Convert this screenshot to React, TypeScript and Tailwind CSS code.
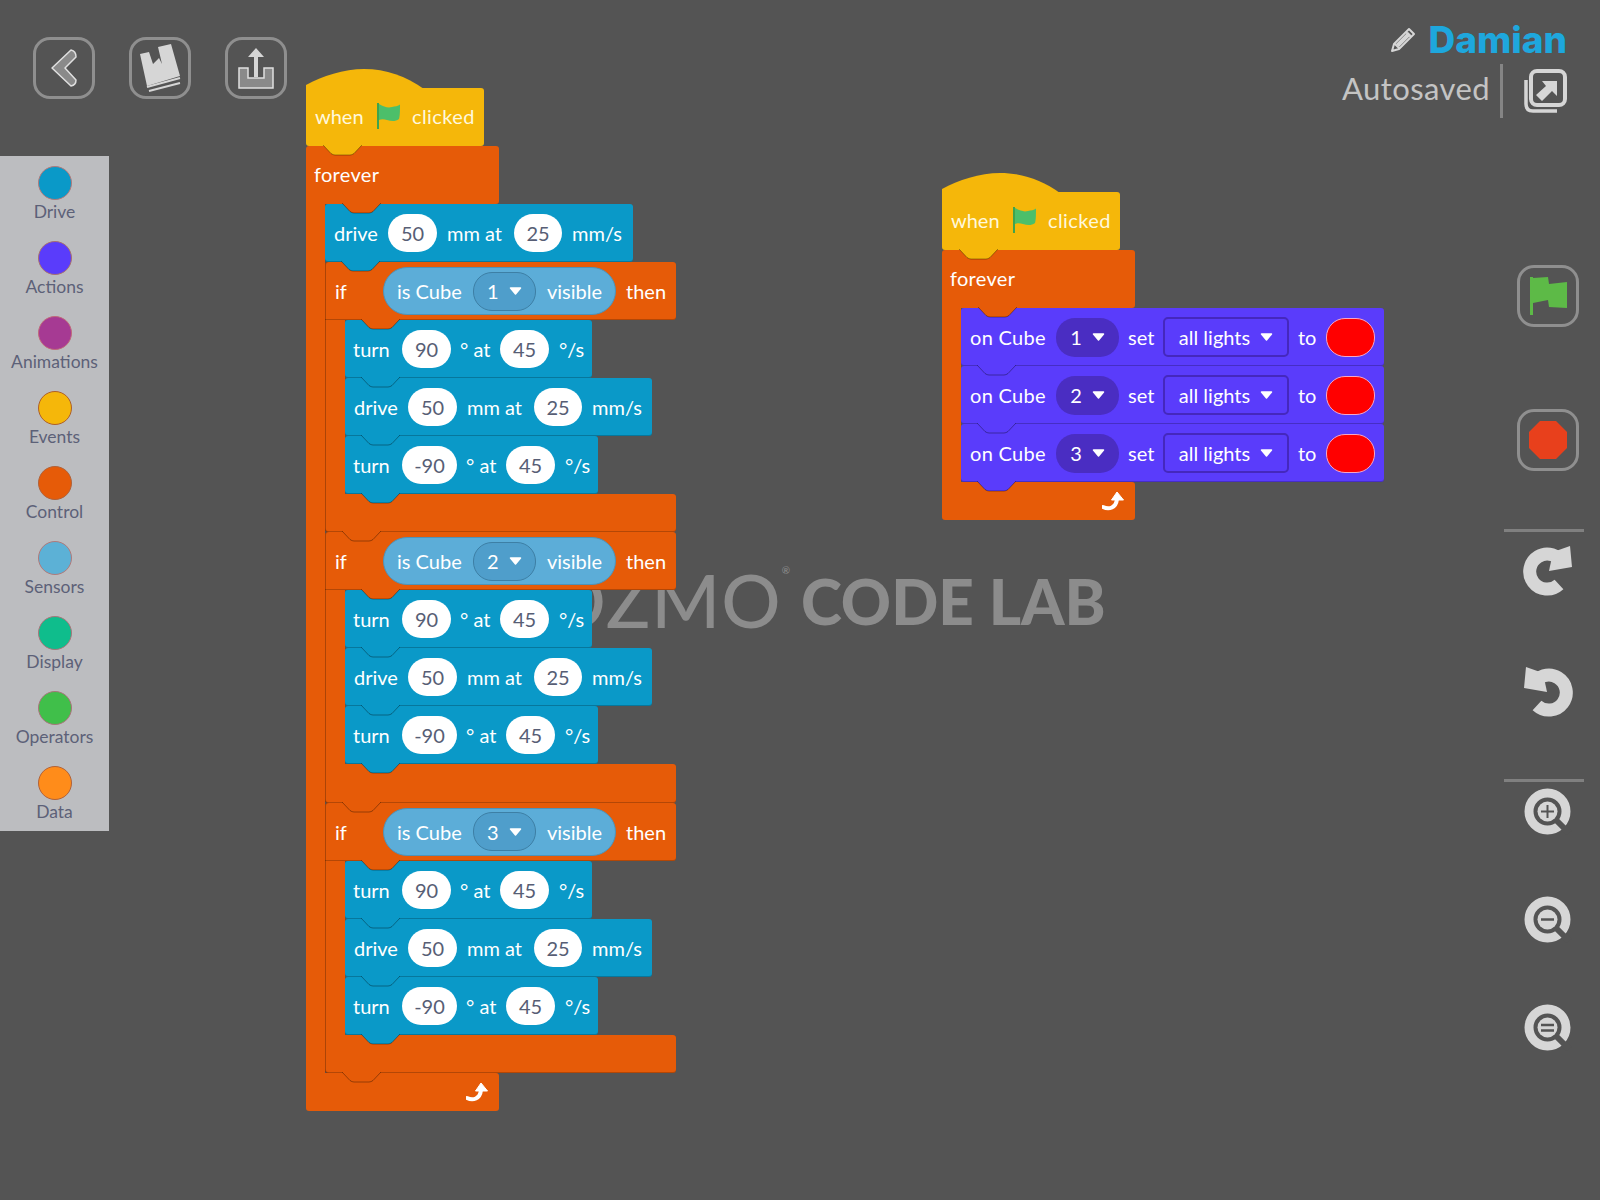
import type { ReactNode } from "react";

const tones = {
  blue: { bg: "bg-[#0a99c8]", fill: "fill-[#0a99c8]" },
  orange: { bg: "bg-[#e65b08]", fill: "fill-[#e65b08]" },
  yellow: { bg: "bg-[#f5b70a]", fill: "fill-[#f5b70a]" },
  purple: { bg: "bg-[#5a3cfb]", fill: "fill-[#5a3cfb]" },
};
type Tone = keyof typeof tones;

const categories = [
  { name: "Drive", dot: "bg-[#0a99c8] border-[#b0797a]" },
  { name: "Actions", dot: "bg-[#5a3cfb] border-[#a8706f]" },
  { name: "Animations", dot: "bg-[#a63a93] border-[#c0697a]" },
  { name: "Events", dot: "bg-[#f5b70a] border-[#ad5f2a]" },
  { name: "Control", dot: "bg-[#e65b08] border-[#b0623a]" },
  { name: "Sensors", dot: "bg-[#5cb1d6] border-[#b07a7a]" },
  { name: "Display", dot: "bg-[#0fbd8c] border-[#a8757a]" },
  { name: "Operators", dot: "bg-[#40bf4a] border-[#a8757a]" },
  { name: "Data", dot: "bg-[#ff8c1a] border-[#b0623a]" },
];

function Notch({ tone, className }: { tone: Tone; className: string }) {
  return (
    <svg width="39" height="11" viewBox="0 0 39 11" className={`absolute top-full z-10 -mt-px ${className}`}>
      <path d="M0 0 L8 8.5 Q10 10 12 10 H27 Q29 10 31 8.5 L39 0 Z" className={tones[tone].fill} />
      <path d="M0 0 L8 8.5 Q10 10 12 10 H27 Q29 10 31 8.5 L39 0" fill="none" stroke="rgba(0,0,0,0.35)" />
    </svg>
  );
}

function Pill({ children, width = "w-[49px]" }: { children: ReactNode; width?: string }) {
  return (
    <span className={`flex h-[38px] shrink-0 items-center justify-center rounded-[19px] bg-white text-[#575e75] ${width}`}>
      {children}
    </span>
  );
}

function Caret() {
  return (
    <svg width="13" height="8" viewBox="0 0 13 8" className="shrink-0">
      <path d="M1.5 1 H11.5 L6.5 7 Z" fill="#fff" stroke="#fff" strokeWidth="1.5" strokeLinejoin="round" />
    </svg>
  );
}

function Row({ tone, width, children }: { tone: Tone; width: string; children: ReactNode }) {
  return (
    <div
      className={`relative flex h-[58px] items-center rounded-[3px] pl-[9px] text-white shadow-[inset_0_-1px_0_rgba(0,0,0,0.22)] ${tones[tone].bg} ${width}`}
    >
      {children}
      <Notch tone={tone} className="left-[16px]" />
    </div>
  );
}

function Drive({ width = "w-[307px]" }: { width?: string }) {
  return (
    <Row tone="blue" width={width}>
      <span className="w-[54px]">drive</span>
      <Pill>50</Pill>
      <span className="w-[77px] pl-[10px]">mm at</span>
      <Pill width="w-[48px]">25</Pill>
      <span className="pl-[10px]">mm/s</span>
    </Row>
  );
}

function Turn({ angle, width, pill = "w-[49px]" }: { angle: string; width: string; pill?: string }) {
  return (
    <Row tone="blue" width={width}>
      <span className="-ml-px w-[49px]">turn</span>
      <Pill width={pill}>{angle}</Pill>
      <span className="w-[49px] pl-[9px]">° at</span>
      <Pill>45</Pill>
      <span className="pl-[10px]">°/s</span>
    </Row>
  );
}

function IfCube({ cube }: { cube: number }) {
  return (
    <div className="flex flex-col">
      <div className="relative flex h-[58px] w-[351px] items-center rounded-t-[3px] rounded-br-[3px] bg-[#e65b08] pl-[10px] text-white shadow-[inset_0_-1px_0_rgba(0,0,0,0.22),inset_1px_0_0_rgba(0,0,0,0.25)]">
        <span className="w-[48px]">if</span>
        <div className="flex h-[48px] w-[233px] items-center justify-between rounded-[24px] border border-[#4f93b8] bg-[#5cadd8] pr-[13px] pl-[13px]">
          <span>is Cube</span>
          <span className="flex h-[39px] w-[63px] items-center justify-center gap-[10px] rounded-[19px] border border-[#3d7fa5] bg-[#4f9ecb]">
            {cube}
            <Caret />
          </span>
          <span>visible</span>
        </div>
        <span className="ml-[10px]">then</span>
        <Notch tone="orange" className="left-[36px]" />
      </div>
      <div className="flex">
        <div className="w-[20px] bg-[#e65b08] shadow-[inset_1px_0_0_rgba(0,0,0,0.25)]" />
        <div className="flex flex-col">
          <Turn angle="90" width="w-[247px]" />
          <Drive />
          <Turn angle="-90" width="w-[253px]" pill="w-[55px]" />
        </div>
      </div>
      <div className="relative h-[38.4px] w-[351px] rounded-r-[3px] rounded-bl-[3px] bg-[#e65b08] shadow-[inset_0_-1px_0_rgba(0,0,0,0.22),inset_1px_0_0_rgba(0,0,0,0.25)]">
        <Notch tone="orange" className="left-[17px]" />
      </div>
    </div>
  );
}

function CubeLights({ cube }: { cube: number }) {
  return (
    <Row tone="purple" width="w-[423px]">
      <span className="w-[86px] tracking-[0.3px]">on Cube</span>
      <span className="flex h-[39px] w-[63px] shrink-0 items-center justify-center gap-[10px] rounded-[19px] bg-[#4a2dc2]">
        {cube}
        <Caret />
      </span>
      <span className="w-[44px] pl-[9px]">set</span>
      <span className="flex h-[40px] w-[126px] shrink-0 items-center justify-center gap-[10px] rounded-[5px] border-2 border-[#4528bd]">
        all lights
        <Caret />
      </span>
      <span className="w-[37px] pl-[9px]">to</span>
      <span className="h-[39px] w-[49px] rounded-[19px] border border-[#f5a6c8] bg-[#ff0000]" />
    </Row>
  );
}

function GreenFlag({ className }: { className: string }) {
  return (
    <svg viewBox="0 0 24 26" className={className}>
      <path d="M1 0 H3 V26 H1 Z" fill="#3fa34d" />
      <path d="M3 1 C8 4 12 5 16 4 C19 3.5 22 3 24 1.5 C24 7 24 13 23 16 C19 19 15 18 11 17 C8 16 5 16 3 17 Z" fill="#4cbf6a" />
    </svg>
  );
}

function LoopArrow() {
  return (
    <svg width="22" height="19" viewBox="0 0 22 19">
      <path d="M1 15 C7 18 14 16 15 7" fill="none" stroke="#fff" strokeWidth="4" strokeLinecap="round" />
      <path d="M15 0 L21.5 8 H9.5 Z" fill="#fff" stroke="#fff" strokeLinejoin="round" />
    </svg>
  );
}

function Stack({ className, children }: { className: string; children: ReactNode }) {
  return (
    <div className={`absolute flex flex-col ${className}`}>
      <div className="relative flex h-[58px] w-[178px] items-center rounded-r-[3px] rounded-bl-[3px] bg-[#f5b70a] pb-[2px] pl-[9px] text-[#fff8dc]">
        <svg width="118" height="22" viewBox="0 0 118 22" className="absolute bottom-full left-0 -mb-px">
          <path d="M0 22 V18 C16 9 38 2 58 2 C80 2 100 9 118 22 Z" className="fill-[#f5b70a]" />
        </svg>
        <span className="w-[61px]">when</span>
        <GreenFlag className="h-[26px] w-[24px]" />
        <span className="ml-[12px] tracking-[0.4px]">clicked</span>
        <Notch tone="yellow" className="left-[17px]" />
      </div>
      <div className="relative flex h-[58px] w-[193px] items-center rounded-t-[3px] rounded-br-[3px] bg-[#e65b08] pb-[2px] pl-[8px] tracking-[0.3px] text-white">
        forever
        <Notch tone="orange" className="left-[36px]" />
      </div>
      <div className="flex">
        <div className="w-[19px] bg-[#e65b08]" />
        <div className="flex flex-col">{children}</div>
      </div>
      <div className="flex h-[38px] w-[193px] items-center justify-end rounded-r-[3px] rounded-bl-[3px] bg-[#e65b08] pr-[11px]">
        <LoopArrow />
      </div>
    </div>
  );
}

function IconButton({ children }: { children: ReactNode }) {
  return (
    <div className="flex h-[62px] w-[62px] items-center justify-center rounded-[17px] border-[3px] border-[#8f8f8f]">
      {children}
    </div>
  );
}

function ZoomIcon({ children }: { children: ReactNode }) {
  return (
    <svg width="48" height="48" viewBox="0 0 48 48">
      <circle cx="23.5" cy="23.5" r="18.5" fill="none" stroke="#d6d6d6" strokeWidth="9" />
      <path d="M31 31 L45 45" stroke="#545454" strokeWidth="6" />
      <circle cx="23.5" cy="23.5" r="10" fill="#d6d6d6" />
      {children}
    </svg>
  );
}

function Circular({ flip }: { flip?: boolean }) {
  return (
    <svg width="50" height="50" viewBox="0 0 50 50" className={flip ? "-scale-x-100" : ""}>
      <path d="M36 38.5 A17.5 17.5 0 1 1 40 18" fill="none" stroke="#d6d6d6" strokeWidth="13" />
      <path d="M47 0 L49 21 L26 25 L30 6 Z" fill="#d6d6d6" />
    </svg>
  );
}

export default function App() {
  return (
    <div className="relative flex h-[1200px] w-[1600px] justify-between overflow-hidden bg-[#545454] font-['Lato',sans-serif] text-[20px]">
      <div className="flex flex-col">
        <div className="mt-[37px] ml-[33px] flex gap-[34px]">
          <IconButton>
            <svg width="30" height="40" viewBox="0 0 30 40">
              <path d="M22 2 L3 20 L22 38 Q27 37 27 32 L16 20 L27 9 Q27 3 22 2 Z" fill="#8a8a8a" stroke="#e0e0e0" strokeWidth="1.5" strokeLinejoin="round" />
            </svg>
          </IconButton>
          <IconButton>
            <svg width="44" height="50" viewBox="0 0 44 50">
              <path d="M2 11 L11 9 L15 21 L21 15 L24 21 L20 4 L33 1 L42 33 L9 43 Z" fill="#d6d6d6" />
              <path d="M9 44 L42 35 M11 48 L42 40" stroke="#d6d6d6" strokeWidth="2" />
            </svg>
          </IconButton>
          <IconButton>
            <svg width="38" height="42" viewBox="0 0 38 42">
              <path d="M2 21 H11 V31 H27 V21 H36 V41 H2 Z" fill="#8a8a8a" stroke="#e0e0e0" strokeWidth="1.5" />
              <path d="M17 30 V10 H11 L19 1 L27 10 H21 V30 Z" fill="#d6d6d6" />
            </svg>
          </IconButton>
        </div>
        <div className="mt-[57px] flex h-[675px] w-[109px] flex-col bg-[#bcbdc0] pt-[10px]">
          {categories.map((c) => (
            <div key={c.name} className="flex h-[75px] shrink-0 flex-col items-center">
              <span className={`h-[34px] w-[34px] rounded-full border ${c.dot}`} />
              <span className="text-[17.5px] leading-[24px] text-[#5c6178]">{c.name}</span>
            </div>
          ))}
        </div>
      </div>

      <div className="mr-[16px] flex w-[240px] flex-col items-end">
        <div className="mt-[17px] mr-[17px] flex items-center gap-[12px]">
          <svg width="26" height="26" viewBox="0 0 26 26">
            <path d="M19 2 L24 7 L9 22 L2 24 L4 17 Z M16 5 L21 10 M5 17 L9 21" fill="none" stroke="#d6d6d6" strokeWidth="2" strokeLinejoin="round" />
            <path d="M18 5 L21 8 L9 20 L6 17 Z" fill="#d6d6d6" />
          </svg>
          <span className="font-['Inter',sans-serif] text-[37px] leading-[46px] font-extrabold text-[#1ea7dd]">Damian</span>
        </div>
        <div className="mt-[1px] flex h-[54px] w-full items-center justify-end whitespace-nowrap">
          <span className="-mt-[6px] text-[31px] tracking-[0.4px] text-[#c4c4c4]">Autosaved</span>
          <span className="mr-[11px] ml-[10px] h-[54px] w-[3px] shrink-0 bg-[#858585]" />
          <svg width="46" height="46" viewBox="0 0 46 46" className="mr-[16px] ml-[8px] shrink-0">
            <rect x="9" y="3" width="34" height="34" rx="6" fill="none" stroke="#d6d6d6" strokeWidth="4" />
            <path d="M4 12 V36 Q4 43 11 43 H35" fill="none" stroke="#d6d6d6" strokeWidth="3.5" />
            <path d="M20 13 H35 V28 L30 23 L20 33 L14 27 L24 18 Z" fill="#d6d6d6" />
          </svg>
        </div>
        <div className="mt-[147px] flex w-[80px] flex-col items-start">
          <div className="ml-[13px]">
            <IconButton>
              <svg width="40" height="40" viewBox="0 0 40 40">
                <path d="M2 1 H5 V39 H2 Z M5 2 L20 1 L21 8 L39 6 V32 L21 31 L20 24 L5 27 Z" fill="#5dba47" />
              </svg>
            </IconButton>
          </div>
          <div className="mt-[82px] ml-[13px]">
            <IconButton>
              <svg width="40" height="40" viewBox="0 0 40 40">
                <path d="M12 1 H28 L39 12 V28 L28 39 H12 L1 28 V12 Z" fill="#e8401c" />
              </svg>
            </IconButton>
          </div>
          <div className="mt-[58px] h-[3px] w-[80px] bg-[#808080]" />
          <div className="mt-[14px] ml-[19px]">
            <Circular />
          </div>
          <div className="mt-[71px] ml-[19px]">
            <Circular flip />
          </div>
          <div className="mt-[62px] h-[3px] w-[80px] bg-[#808080]" />
          <div className="mt-[6px] ml-[20px] flex flex-col gap-[60px]">
            <ZoomIcon>
              <path d="M23.5 17 V30 M17 23.5 H30" stroke="#545454" strokeWidth="2" />
            </ZoomIcon>
            <ZoomIcon>
              <path d="M17 23.5 H30" stroke="#545454" strokeWidth="2.5" />
            </ZoomIcon>
            <ZoomIcon>
              <path d="M17 21 H30 M17 26.5 H30" stroke="#545454" strokeWidth="2.5" />
            </ZoomIcon>
          </div>
        </div>
      </div>

      <div className="absolute top-[550px] left-[490px] flex items-end gap-[11px] text-[#8c8c8c]">
        <span className="w-[300px] text-right text-[74px] leading-[100px] font-medium tracking-[1px]">
          COZMO
          <span className="align-top text-[10px] leading-[40px] tracking-normal">®</span>
        </span>
        <span className="text-[62px] leading-[98px] font-black">CODE LAB</span>
      </div>

      <Stack className="top-[88px] left-[306px]">
        <Drive width="w-[308px]" />
        <IfCube cube={1} />
        <IfCube cube={2} />
        <IfCube cube={3} />
      </Stack>

      <Stack className="top-[192px] left-[942px]">
        <CubeLights cube={1} />
        <CubeLights cube={2} />
        <CubeLights cube={3} />
      </Stack>
    </div>
  );
}
